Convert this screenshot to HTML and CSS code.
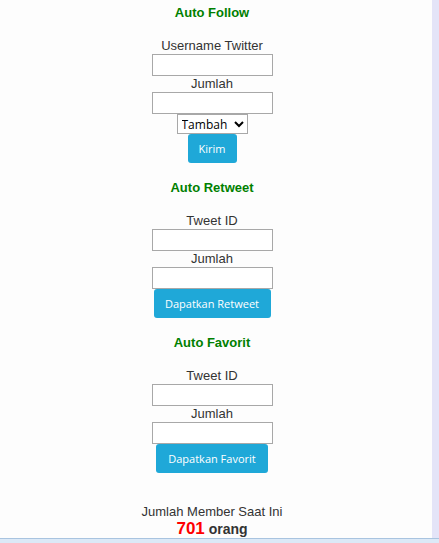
FILE: index.html
```html
<!DOCTYPE html>
<html>
<head>
<meta charset="utf-8">
<link rel="stylesheet" href="styles.css">
</head>
<body>
<div class="frame">
  <div class="main">
    <div class="col">
      <section class="block">
        <h3 class="title">Auto Follow</h3>
        <div class="form">
          <label class="lbl">Username Twitter</label>
          <input class="field" type="text">
          <label class="lbl">Jumlah</label>
          <input class="field" type="text">
          <select class="sel"><option>Tambah</option></select>
          <button class="btn btn-kirim">Kirim</button>
        </div>
      </section>
      <section class="block">
        <h3 class="title">Auto Retweet</h3>
        <div class="form">
          <label class="lbl">Tweet ID</label>
          <input class="field" type="text">
          <label class="lbl">Jumlah</label>
          <input class="field" type="text">
          <button class="btn btn-wide">Dapatkan Retweet</button>
        </div>
      </section>
      <section class="block">
        <h3 class="title">Auto Favorit</h3>
        <div class="form">
          <label class="lbl">Tweet ID</label>
          <input class="field" type="text">
          <label class="lbl">Jumlah</label>
          <input class="field" type="text">
          <button class="btn btn-fav">Dapatkan Favorit</button>
        </div>
      </section>
      <div class="stats">
        <div class="stats-label">Jumlah Member Saat Ini</div>
        <div class="stats-count"><span class="num">701</span> orang</div>
      </div>
    </div>
  </div>
  <div class="side"></div>
</div>
<div class="bottom"></div>
</body>
</html>
```
FILE: styles.css
```css
html, body {
  margin: 0;
  padding: 0;
  background: #dce9f7;
  font-family: "Liberation Sans", Arial, sans-serif;
  color: #333;
}
.frame {
  display: flex;
  height: 538px;
  border-bottom: 1px solid #a9c4e0;
}
.main {
  width: 432px;
  background: #fdfdfd;
}
.side {
  flex: 1;
  background: #e4e4f8;
}
.col {
  width: 424px;
  display: flex;
  flex-direction: column;
  align-items: center;
}
.block {
  display: flex;
  flex-direction: column;
  align-items: center;
}
.title {
  margin: 5px 0 0;
  font-size: 13px;
  line-height: 15px;
  font-weight: bold;
  color: #008000;
}
.block + .block .title { margin-top: 17px; }
.form {
  display: flex;
  flex-direction: column;
  align-items: center;
  margin-top: 18px;
}
.lbl {
  font-size: 13px;
  line-height: 16px;
  height: 16px;
  display: block;
}
.field {
  box-sizing: border-box;
  width: 121px;
  height: 22px;
  margin: 0;
  border: 1px solid #a8a8a8;
  background: #fff;
  padding: 1px 2px;
}
.sel {
  box-sizing: border-box;
  width: 71px;
  height: 20px;
  margin: 0;
  font-family: "Open Sans", "Liberation Sans", sans-serif;
  font-size: 12px;
  border: 1px solid #a8a8a8;
  background: #fff;
  color: #000;
}
.btn {
  box-sizing: border-box;
  height: 29px;
  border: none;
  border-radius: 3px;
  background: #1fa8d8;
  color: #fff;
  font-family: "Open Sans", "Liberation Sans", sans-serif;
  font-size: 11px;
  padding: 0;
  margin: 0;
  white-space: nowrap;
}
.btn-kirim { width: 49px; }
.btn-wide { width: 117px; }
.btn-fav { width: 112px; }
.stats {
  margin-top: 31px;
  display: flex;
  flex-direction: column;
  align-items: center;
}
.stats-label {
  font-size: 13px;
  line-height: 16px;
}
.stats-count {
  font-size: 14px;
  font-weight: bold;
  line-height: 18px;
}
.num {
  color: #f00;
  font-size: 17px;
}
.bottom {
  height: 4px;
}
```
